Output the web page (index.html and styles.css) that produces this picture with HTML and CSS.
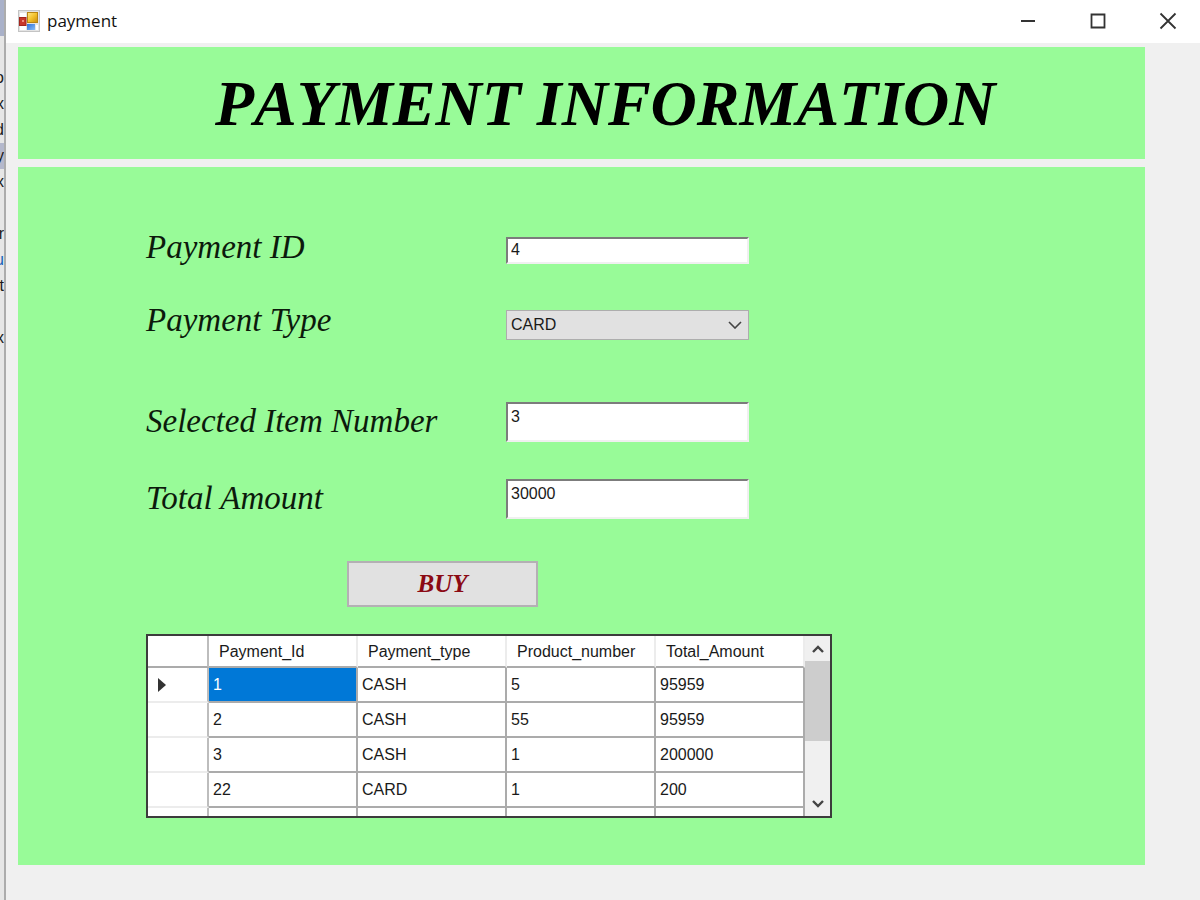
FILE: index.html
```html
<!DOCTYPE html>
<html lang="en">
<head>
<meta charset="utf-8">
<title>payment</title>
<link rel="stylesheet" href="styles.css">
</head>
<body>
<div class="desktop">
  <div class="behind">
    <div class="behind-tab"></div>
    <ul class="behind-list">
      <li>o</li><li>x</li><li>d</li><li class="picked">y</li><li>x</li><li></li><li>r</li><li class="blue">u</li><li>t</li><li></li><li>x</li>
    </ul>
  </div>
  <div class="window">
    <header class="titlebar">
      <svg class="app-icon" viewBox="0 0 22 22" aria-hidden="true">
        <defs>
          <linearGradient id="gold" x1="0" y1="0" x2="1" y2="1"><stop offset="0" stop-color="#ffe98a"/><stop offset=".5" stop-color="#f3c22c"/><stop offset="1" stop-color="#c88a10"/></linearGradient>
          <linearGradient id="blue" x1="0" y1="0" x2="1" y2="1"><stop offset="0" stop-color="#2f6fd8"/><stop offset="1" stop-color="#86bdf8"/></linearGradient>
        </defs>
        <rect x=".5" y=".5" width="21" height="21" fill="#e4e4e4" stroke="#c4c4c4"/>
        <rect x="2" y="3" width="6" height="4" fill="#fff"/>
        <rect x="2" y="16" width="6" height="4" fill="#fff"/>
        <rect x="18" y="15" width="2" height="5" fill="#fff"/>
        <rect x="1.500" y="7.500" width="6.500" height="8" fill="#c8372c" stroke="#a3261f"/>
        <rect x="4" y="10" width="2" height="2" fill="#ee8f80"/>
        <rect x="9.500" y="2.500" width="10" height="10" fill="url(#gold)" stroke="#b98512"/>
        <rect x="9" y="14" width="8" height="6" fill="url(#blue)"/>
      </svg>
      <span class="caption">payment</span>
      <div class="window-buttons">
        <button type="button" aria-label="Minimize"><svg viewBox="0 0 18 18"><path d="M2 9h14" stroke-width="2"/></svg></button>
        <button type="button" aria-label="Maximize"><svg viewBox="0 0 18 18"><path d="M2.500 2.500h13v13h-13z"/></svg></button>
        <button type="button" aria-label="Close"><svg viewBox="0 0 18 18"><path d="M1.500 1.500l15 15M16.500 1.500l-15 15"/></svg></button>
      </div>
    </header>
    <main class="client">
      <section class="panel banner"><h1>PAYMENT INFORMATION</h1></section>
      <section class="panel content">
        <form>
          <div class="field compact gap-m">
            <label for="pid">Payment ID</label>
            <input class="box" id="pid" type="text" value="4">
          </div>
          <div class="field compact gap-l">
            <label for="ptype">Payment Type</label>
            <div class="combo">
              <select id="ptype"><option>CARD</option><option>CASH</option></select>
              <svg viewBox="0 0 14 8" aria-hidden="true"><path d="M1 1l6 6 6-6"/></svg>
            </div>
          </div>
          <div class="field gap-s">
            <label for="item">Selected Item Number</label>
            <textarea class="box" id="item">3</textarea>
          </div>
          <div class="field">
            <label for="total">Total Amount</label>
            <textarea class="box" id="total">30000</textarea>
          </div>
          <button class="buy" type="button">BUY</button>
        </form>
        <div class="grid">
          <div class="grid-view">
            <table>
              <colgroup><col class="col-head"><col><col><col><col></colgroup>
              <thead>
                <tr><th></th><th>Payment_Id</th><th>Payment_type</th><th>Product_number</th><th>Total_Amount</th></tr>
              </thead>
              <tbody>
                <tr><th><svg class="marker" viewBox="0 0 8 14" aria-label="Current row"><path d="M0 0l8 7-8 7z"/></svg></th><td class="selected">1</td><td>CASH</td><td>5</td><td>95959</td></tr>
                <tr><th></th><td>2</td><td>CASH</td><td>55</td><td>95959</td></tr>
                <tr><th></th><td>3</td><td>CASH</td><td>1</td><td>200000</td></tr>
                <tr><th></th><td>22</td><td>CARD</td><td>1</td><td>200</td></tr>
                <tr><th></th><td></td><td></td><td></td><td></td></tr>
              </tbody>
            </table>
          </div>
          <div class="scrollbar">
            <button type="button" aria-label="Scroll up"><svg viewBox="0 0 12 8"><path d="M1 7l5-5 5 5"/></svg></button>
            <div class="thumb"></div>
            <button class="down" type="button" aria-label="Scroll down"><svg viewBox="0 0 12 8"><path d="M1 1l5 5 5-5"/></svg></button>
          </div>
        </div>
      </section>
    </main>
  </div>
</div>
</body>
</html>
```
FILE: styles.css
```css
* { box-sizing: border-box; }

body {
  margin: 0;
  background: #f0f0f0;
  color: #1a1a1a;
  font: 16px/20px "Liberation Sans", Arial, sans-serif;
}

button, input, select, textarea { font: inherit; color: inherit; }

.desktop { display: flex; min-height: 100vh; }

/* Sliver of the window lying behind this one */
.behind {
  width: 6px;
  flex: none;
  overflow: hidden;
  background: #e6e6e6;
  border-right: 2px solid #acacac;
}
.behind-tab { height: 36px; background: #a9b1c9; }
.behind-list {
  margin: 29px 0 0;
  padding: 0;
  list-style: none;
  line-height: 26px;
}
.behind-list li {
  display: flex;
  justify-content: flex-end;
  height: 26px;
}
.behind-list .picked { background: #b4b8cc; }
.behind-list .blue { color: #1560b8; }

.window { flex: 1; min-width: 0; background: #f0f0f0; }

.titlebar {
  display: flex;
  align-items: center;
  height: 43px;
  padding: 0 0 2px 12px;
  background: #fff;
}
.app-icon { width: 22px; height: 22px; }
.caption {
  flex: 1;
  padding-left: 7px;
  font: 17px/24px "Open Sans", "Noto Sans", sans-serif;
  color: #111;
}
.window-buttons { display: flex; }
.window-buttons button {
  width: 70px;
  height: 40px;
  padding: 0 0 0 5px;
  border: 0;
  background: none;
}
.window-buttons svg {
  display: block;
  width: 18px;
  height: 18px;
  margin: 0 auto;
  fill: none;
  stroke: #333;
  stroke-width: 1.8;
}

.client {
  display: flex;
  flex-direction: column;
  gap: 8px;
  padding: 4px 55px 35px 12px;
}
.panel { background: #98fb98; }

.banner { padding: 2px 0 0 197px; }
.banner h1 {
  margin: 0;
  font: italic bold 64px/110px "Liberation Serif", "Times New Roman", serif;
  font-kerning: none;
  color: #000;
}

.content { padding: 70px 0 47px 128px; }

.field {
  display: grid;
  grid-template-columns: 360px 243px;
  align-items: start;
}
.field label {
  font: italic 33px/38px "Liberation Serif", "Times New Roman", serif;
  color: #0c1a0c;
}
.compact label { line-height: 20px; }
.gap-s { margin-bottom: 37px; }
.gap-m { margin-bottom: 46px; }
.gap-l { margin-bottom: 62px; }

.box {
  display: block;
  width: 100%;
  height: 40px;
  padding: 3px;
  border: 2px solid;
  border-color: #7c7c7c #f0f0f0 #f0f0f0 #7c7c7c;
  border-radius: 0;
  background: #fff;
  line-height: 20px;
  resize: none;
  overflow: hidden;
}
.compact .box { height: 27px; padding: 1px 3px 2px; }

.combo { position: relative; }
.combo select {
  display: block;
  width: 100%;
  height: 30px;
  padding: 0 4px;
  border: 1px solid #adadad;
  border-radius: 0;
  background: #e1e1e1;
  appearance: none;
}
.combo svg {
  position: absolute;
  right: 7px;
  top: 11px;
  width: 14px;
  height: 8px;
  fill: none;
  stroke: #444;
  stroke-width: 1.6;
  pointer-events: none;
}

.buy {
  display: block;
  width: 191px;
  height: 46px;
  margin: 42px 0 27px 201px;
  padding: 0;
  border: 2px solid #b4b0b4;
  background: #e1e1e1;
  font: italic bold 25px/30px "Liberation Serif", "Times New Roman", serif;
  font-kerning: none;
  color: #8b0a14;
}

.grid {
  display: flex;
  width: 686px;
  height: 184px;
  border: 2px solid #3c3c3c;
  background: #fff;
}
.grid-view { flex: 1; overflow: hidden; }
table {
  width: 100%;
  border-collapse: separate;
  border-spacing: 0;
  table-layout: fixed;
}
.col-head { width: 61px; }
th, td {
  height: 35px;
  padding: 0 0 0 4px;
  border-right: 2px solid #ababab;
  border-bottom: 2px solid #ababab;
  text-align: left;
  font-weight: normal;
  overflow: hidden;
}
thead th { height: 32px; padding: 2px 0 0 10px; border-right-color: #ececec; }
thead th:first-child { border-right-color: #bdbdbd; }
tbody th { padding-left: 10px; border-right-color: #bdbdbd; border-bottom-color: #ececec; }
.selected { background: #0078d7; color: #fff; }
.marker { display: block; width: 8px; height: 14px; fill: #333; }

.scrollbar {
  display: flex;
  flex-direction: column;
  width: 25px;
  background: #f0f0f0;
}
.scrollbar button {
  height: 25px;
  padding: 0;
  border: 0;
  background: none;
}
.scrollbar button svg {
  display: block;
  width: 12px;
  height: 8px;
  margin: 0 auto;
  fill: none;
  stroke: #444;
  stroke-width: 2.4;
}
.thumb { height: 80px; background: #cdcdcd; }
.scrollbar .down { margin-top: auto; }
```
